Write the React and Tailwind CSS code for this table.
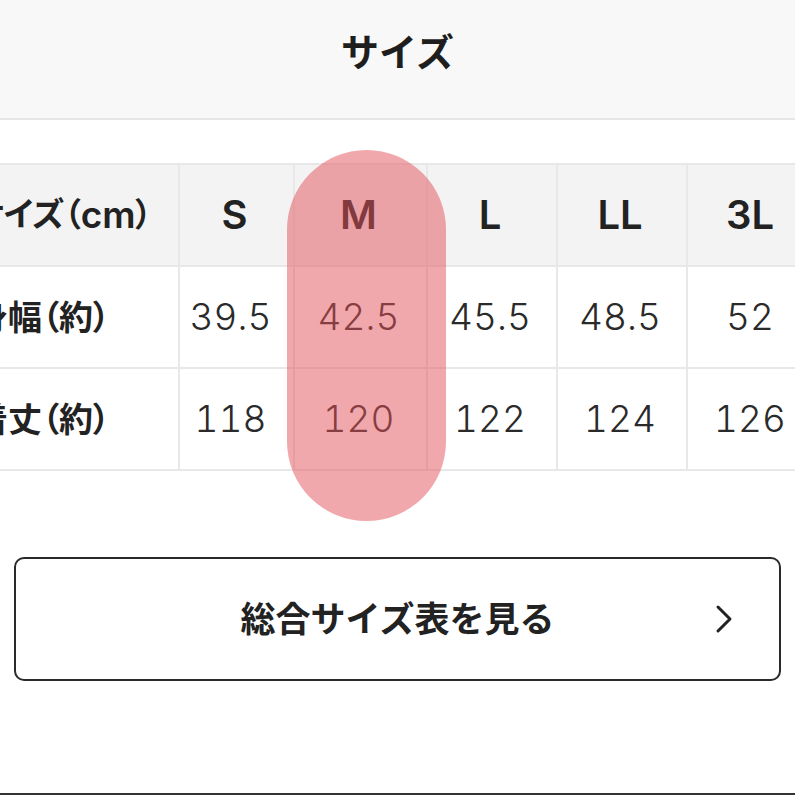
import React from "react";

const cols = ["S", "M", "L", "LL", "3L"];
const rows = [
  { label: "身幅（約）", values: ["39.5", "42.5", "45.5", "48.5", "52"] },
  { label: "着丈（約）", values: ["118", "120", "122", "124", "126"] },
];

function Cell({ children, className = "" }) {
  return (
    <div
      className={
        "h-[102px] border-b-2 border-r-2 border-[#e8e8e8] flex items-center " +
        className
      }
    >
      {children}
    </div>
  );
}

export default function App() {
  return (
    <div
      className="w-[795px] h-[795px] bg-white overflow-hidden flex flex-col text-[#222]"
      style={{ fontFamily: 'Inter, "Noto Sans CJK JP", sans-serif' }}
    >
      <header className="h-[120px] shrink-0 bg-[#f8f8f8] border-b-2 border-[#e6e6e6] flex items-center justify-center">
        <h1 className="text-[38px] font-bold leading-none -mt-[14px] text-[#1e1e1e]">サイズ</h1>
      </header>

      <div className="relative mt-[43px] shrink-0">
        <div className="-ml-[60px] w-[878px] grid grid-cols-[240px_115px_133px_130px_130px_130px] border-t-2 border-[#e8e8e8]">
          <Cell className="bg-[#f3f3f3] text-[33px] font-bold justify-end pr-[26px] whitespace-nowrap [font-feature-settings:'palt']">
            サイズ（<span className="text-[37px] font-semibold">cm</span>）
          </Cell>
          {cols.map((c) => (
            <Cell key={c} className="bg-[#f3f3f3] text-[40px] font-semibold justify-center pr-[4px]">
              {c}
            </Cell>
          ))}
          {rows.map((r) => (
            <React.Fragment key={r.label}>
              <Cell className="text-[34px] font-bold justify-end pr-[68px] whitespace-nowrap [font-feature-settings:'palt']">
                {r.label}
              </Cell>
              {r.values.map((v, i) => (
                <Cell
                  key={i}
                  className={
                    "text-[37px] font-light text-[#2a2a2a] justify-center tabular-nums " +
                    (i === 0 ? "pr-[12px]" : "pr-[4px]")
                  }
                >
                  {v}
                </Cell>
              ))}
            </React.Fragment>
          ))}
        </div>
        <div className="absolute left-[287px] -top-[13px] w-[159px] h-[371px] rounded-full bg-[#e3515a]/50 pointer-events-none" />
      </div>

      <button className="mt-[86px] mx-[14px] h-[124px] shrink-0 rounded-[10px] border-2 border-[#2a2a2a] bg-white relative flex items-center justify-center">
        <span className="text-[35px] font-bold text-[#222] leading-none">総合サイズ表を見る</span>
        <svg
          className="absolute right-[46px] top-1/2 -translate-y-1/2"
          width="18"
          height="30"
          viewBox="0 0 18 30"
          fill="none"
        >
          <path d="M3 3 L15 15 L3 27" stroke="#222" strokeWidth="3" strokeLinecap="round" strokeLinejoin="round" />
        </svg>
      </button>

      <div className="mt-auto h-[2px] bg-[#333] shrink-0" />
    </div>
  );
}
